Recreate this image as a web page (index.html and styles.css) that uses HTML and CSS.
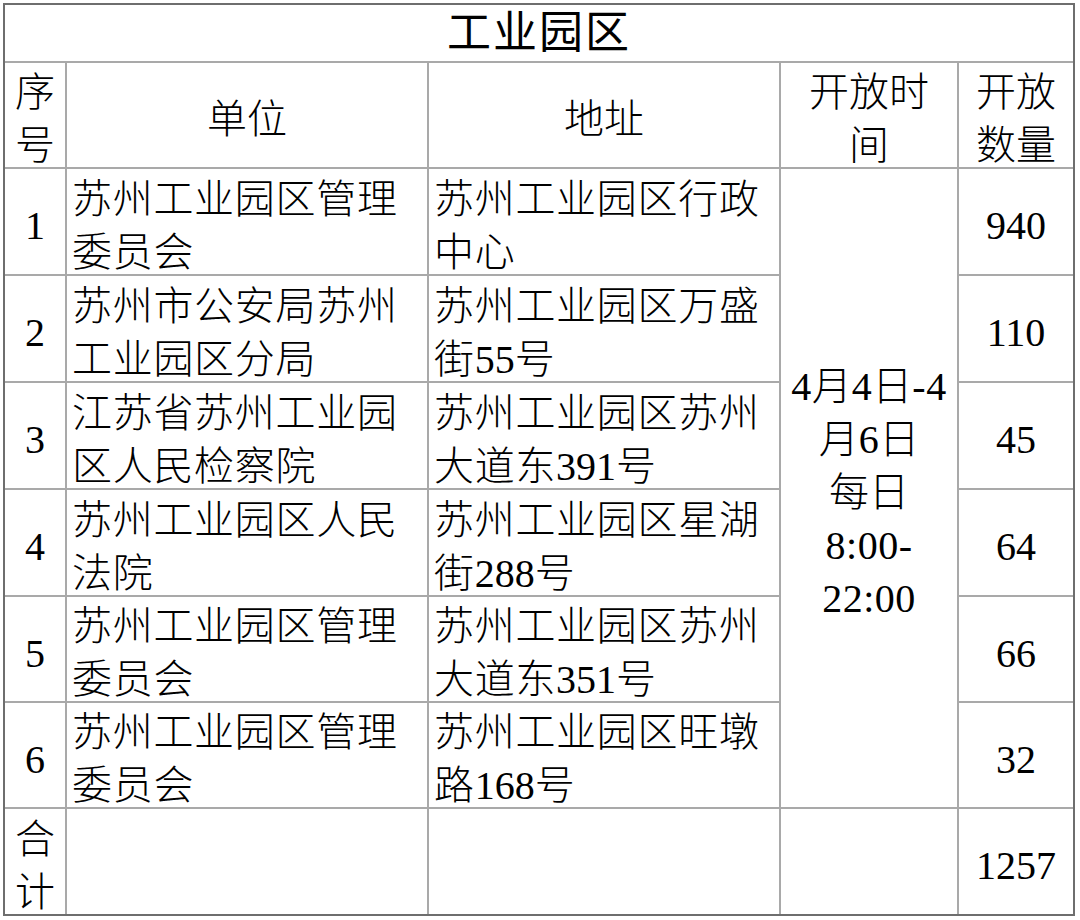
FILE: index.html
```html
<!DOCTYPE html>
<html lang="zh-CN">
<head>
<meta charset="utf-8">
<title>工业园区</title>
<link rel="stylesheet" href="styles.css">
</head>
<body>
<div class="sheet">
  <div class="cell title"><div>工业园区</div></div>

  <div class="cell c"><div>序<br>号</div></div>
  <div class="cell c"><div>单位</div></div>
  <div class="cell c"><div>地址</div></div>
  <div class="cell c"><div>开放时<br>间</div></div>
  <div class="cell c"><div>开放<br>数量</div></div>

  <div class="cell c"><div class="num">1</div></div>
  <div class="cell l"><div>苏州工业园区管理<br>委员会</div></div>
  <div class="cell l"><div>苏州工业园区行政<br>中心</div></div>
  <div class="cell c time"><div><span class="num">4</span>月<span class="num">4</span>日<span class="num">-4</span><br>月<span class="num">6</span>日<br>每日<br><span class="num">8:00-</span><br><span class="num">22:00</span></div></div>
  <div class="cell c"><div class="num">940</div></div>

  <div class="cell c"><div class="num">2</div></div>
  <div class="cell l"><div>苏州市公安局苏州<br>工业园区分局</div></div>
  <div class="cell l"><div>苏州工业园区万盛<br>街<span class="num">55</span>号</div></div>
  <div class="cell c"><div class="num">110</div></div>

  <div class="cell c"><div class="num">3</div></div>
  <div class="cell l"><div>江苏省苏州工业园<br>区人民检察院</div></div>
  <div class="cell l"><div>苏州工业园区苏州<br>大道东<span class="num">391</span>号</div></div>
  <div class="cell c"><div class="num">45</div></div>

  <div class="cell c"><div class="num">4</div></div>
  <div class="cell l"><div>苏州工业园区人民<br>法院</div></div>
  <div class="cell l"><div>苏州工业园区星湖<br>街<span class="num">288</span>号</div></div>
  <div class="cell c"><div class="num">64</div></div>

  <div class="cell c"><div class="num">5</div></div>
  <div class="cell l"><div>苏州工业园区管理<br>委员会</div></div>
  <div class="cell l"><div>苏州工业园区苏州<br>大道东<span class="num">351</span>号</div></div>
  <div class="cell c"><div class="num">66</div></div>

  <div class="cell c"><div class="num">6</div></div>
  <div class="cell l"><div>苏州工业园区管理<br>委员会</div></div>
  <div class="cell l"><div>苏州工业园区旺墩<br>路<span class="num">168</span>号</div></div>
  <div class="cell c"><div class="num">32</div></div>

  <div class="cell c"><div>合<br>计</div></div>
  <div class="cell l"></div>
  <div class="cell l"></div>
  <div class="cell c"></div>
  <div class="cell c"><div class="num">1257</div></div>
</div>
</body>
</html>
```

FILE: styles.css
```css
html, body {
  margin: 0;
  padding: 0;
  background: #ffffff;
}

body {
  padding: 3px 0 0 3px;
  font-family: "Liberation Serif", "Noto Sans CJK SC", serif;
  color: #000000;
}

.sheet {
  width: 1068px;
  display: grid;
  grid-template-columns: 60px 360px 350px 176px 114px;
  grid-template-rows: 56px 104px 105px 105px 105px 105px 104px 104px 105px;
  gap: 2px;
  background: #a9a9a9;
  border: 2px solid #6e6e6e;
}

.cell {
  background: #ffffff;
  font-size: 40px;
  font-weight: 300;
  line-height: 53px;
  display: flex;
  align-items: center;
  padding-top: 8px;
  box-sizing: border-box;
  white-space: nowrap;
}

.c {
  justify-content: center;
  text-align: center;
}

.l {
  justify-content: flex-start;
  text-align: left;
  padding-left: 5px;
  letter-spacing: 0.7px;
}

.num {
  font-family: "Liberation Serif", serif;
  font-weight: 400;
  letter-spacing: 0;
}

.time .num {
  letter-spacing: 0.5px;
}

.title {
  grid-column: 1 / -1;
  justify-content: center;
  font-size: 44px;
  font-weight: 400;
  letter-spacing: 2px;
  padding-top: 0;
}

.time {
  grid-row: 3 / 9;
  grid-column: 4;
}
```
